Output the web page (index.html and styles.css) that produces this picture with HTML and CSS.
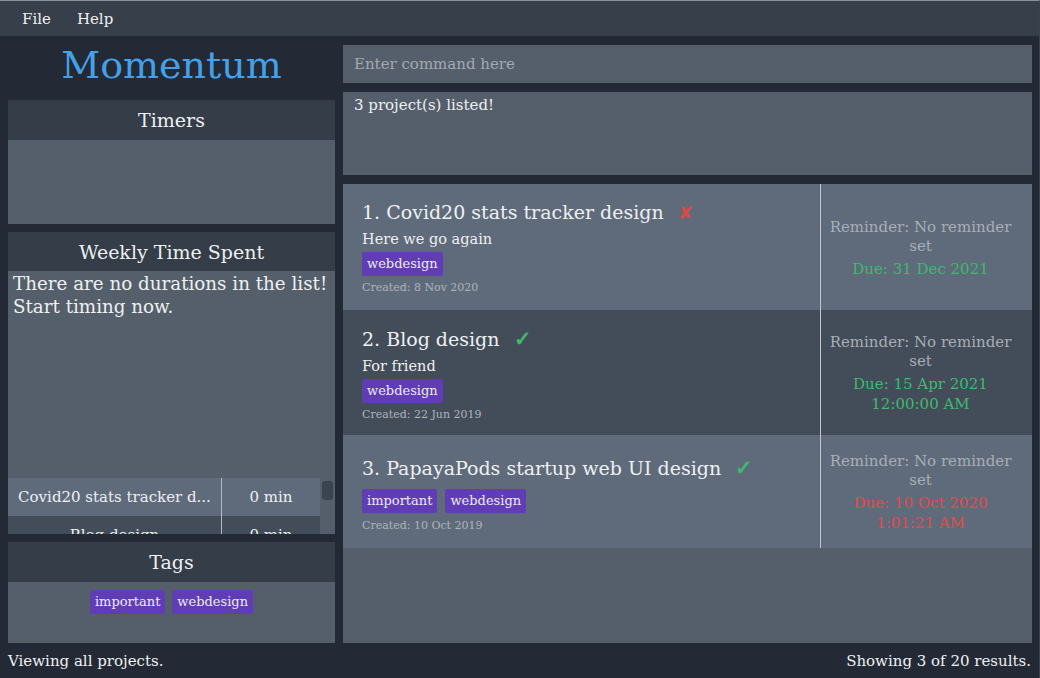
FILE: index.html
```html
<!DOCTYPE html>
<html>
<head>
<meta charset="utf-8">
<link rel="stylesheet" href="styles.css">
</head>
<body>
<div class="window">
  <div class="menubar">
    <span class="menu">File</span>
    <span class="menu">Help</span>
  </div>
  <div class="main">
    <div class="left">
      <div class="brand">Momentum</div>
      <div class="panel timers">
        <div class="panel-head">Timers</div>
        <div class="panel-body"></div>
      </div>
      <div class="panel weekly">
        <div class="panel-head">Weekly Time Spent</div>
        <div class="panel-body weekly-body">
          <div class="weekly-msg">There are no durations in the list!<br>Start timing now.</div>
          <div class="table-wrap">
            <div class="table">
              <div class="trow light"><div class="tname">Covid20 stats tracker d...</div><div class="ttime">0 min</div></div>
              <div class="trow dark"><div class="tname">Blog design</div><div class="ttime">0 min</div></div>
            </div>
            <div class="scroll"><div class="thumb"></div></div>
          </div>
        </div>
      </div>
      <div class="panel tags">
        <div class="panel-head">Tags</div>
        <div class="panel-body tags-body">
          <span class="tag">important</span><span class="tag">webdesign</span>
        </div>
      </div>
    </div>
    <div class="right">
      <div class="command">Enter command here</div>
      <div class="result">3 project(s) listed!</div>
      <div class="list">
        <div class="card light c1">
          <div class="card-main">
            <div class="title">1. Covid20 stats tracker design <span class="cross">✘</span></div>
            <div class="desc">Here we go again</div>
            <div class="card-tags"><span class="tag">webdesign</span></div>
            <div class="created">Created: 8 Nov 2020</div>
          </div>
          <div class="card-side">
            <div class="reminder">Reminder: No reminder set</div>
            <div class="due green">Due: 31 Dec 2021</div>
          </div>
        </div>
        <div class="card dark c2">
          <div class="card-main">
            <div class="title">2. Blog design <span class="check">✓</span></div>
            <div class="desc">For friend</div>
            <div class="card-tags"><span class="tag">webdesign</span></div>
            <div class="created">Created: 22 Jun 2019</div>
          </div>
          <div class="card-side">
            <div class="reminder">Reminder: No reminder set</div>
            <div class="due green">Due: 15 Apr 2021 12:00:00 AM</div>
          </div>
        </div>
        <div class="card light c3">
          <div class="card-main">
            <div class="title">3. PapayaPods startup web UI design <span class="check">✓</span></div>
            <div class="card-tags"><span class="tag">important</span><span class="tag">webdesign</span></div>
            <div class="created">Created: 10 Oct 2019</div>
          </div>
          <div class="card-side">
            <div class="reminder">Reminder: No reminder set</div>
            <div class="due red">Due: 10 Oct 2020 1:01:21 AM</div>
          </div>
        </div>
      </div>
    </div>
  </div>
  <div class="statusbar">
    <span>Viewing all projects.</span>
    <span>Showing 3 of 20 results.</span>
  </div>
</div>
</body>
</html>
```
FILE: styles.css
```css
* { box-sizing: border-box; }
html, body {
  margin: 0;
  padding: 0;
  width: 1040px;
  height: 678px;
  overflow: hidden;
  background: #232a35;
  font-family: "DejaVu Serif", "Liberation Serif", serif;
  color: #eef0f2;
}
.window {
  width: 1040px;
  height: 678px;
  display: flex;
  flex-direction: column;
  border-top: 1px solid #8a9099;
  border-right: 1px solid #3a424d;
}
.menubar {
  height: 35px;
  background: #373f4a;
  display: flex;
  align-items: center;
  padding-left: 22px;
  gap: 26px;
  font-size: 15px;
}
.main {
  display: flex;
  height: 607px;
  padding: 0 7px 0 8px;
  gap: 8px;
}
.left {
  width: 327px;
  display: flex;
  flex-direction: column;
}
.brand {
  height: 64px;
  display: flex;
  align-items: center;
  justify-content: center;
  color: #44a0e8;
  font-size: 38px;
  padding-bottom: 6px;
}
.panel { display: flex; flex-direction: column; }
.panel-head {
  background: #343d48;
  height: 40px;
  display: flex;
  align-items: center;
  justify-content: center;
  font-size: 19px;
}
.panel-body { background: #555f6b; flex: 1; }
.timers { height: 124px; }
.weekly { height: 302px; margin-top: 8px; }
.weekly .panel-head { height: 39px; }
.weekly-body {
  display: flex;
  flex-direction: column;
  overflow: hidden;
}
.weekly-msg {
  padding: 1px 5px;
  font-size: 18.3px;
  line-height: 23px;
  white-space: nowrap;
  flex: 1;
}
.table-wrap {
  height: 56px;
  display: flex;
  overflow: hidden;
}
.table { width: 312px; }
.trow {
  height: 38px;
  display: flex;
  font-size: 15px;
}
.trow.light { background: #5f6b7b; }
.trow.dark { background: #434c59; }
.tname {
  width: 214px;
  border-right: 1px solid #b5bbc2;
  display: flex;
  align-items: center;
  justify-content: center;
  white-space: nowrap;
  overflow: hidden;
}
.ttime {
  flex: 1;
  display: flex;
  align-items: center;
  justify-content: center;
}
.scroll {
  width: 15px;
  background: #555f6b;
  padding: 3px 2px;
}
.thumb {
  height: 19px;
  background: #3a4350;
  border-radius: 3px;
}
.tags { height: 101px; margin-top: 8px; }
.tags-body {
  display: flex;
  justify-content: center;
  align-items: flex-start;
  padding-top: 8px;
  gap: 7px;
}
.tag {
  display: inline-block;
  background: #613db5;
  color: #eceaf5;
  font-size: 13px;
  height: 24px;
  line-height: 24px;
  padding: 0 5px;
  border-radius: 2px;
}
.right {
  flex: 1;
  display: flex;
  flex-direction: column;
  padding-top: 9px;
  gap: 9px;
}
.command {
  height: 38px;
  background: #555f6b;
  color: #a2a9b2;
  font-size: 15px;
  display: flex;
  align-items: center;
  padding-left: 11px;
}
.result {
  height: 83px;
  background: #555f6b;
  font-size: 15px;
  padding: 4px 11px;
}
.list {
  flex: 1;
  background: #555f6b;
  display: flex;
  flex-direction: column;
}
.card { display: flex; }
.card.light { background: #5f6b7b; }
.card.dark { background: #434c59; }
.c1 { height: 126px; }
.c2 { height: 125px; }
.c3 { height: 113px; }
.card-main {
  width: 478px;
  border-right: 1px solid #c0c5cb;
  padding: 16px 0 0 19px;
}
.c3 .card-main { padding-top: 20px; }
.title {
  font-size: 19px;
  line-height: 25px;
  white-space: nowrap;
}
.cross { color: #e04848; margin-left: 8px; font-size: 18px; }
.check { color: #3dba6f; margin-left: 8px; font-size: 21px; font-weight: bold; }
.desc {
  font-size: 14.5px;
  margin-top: 4px;
  line-height: 20px;
}
.card-tags { display: flex; gap: 8px; margin-top: 3px; }
.c3 .card-tags { margin-top: 8px; }
.created {
  font-size: 11px;
  color: #aeb4bc;
  margin-top: 5px;
}
.c3 .created { margin-top: 6px; }
.card-side {
  flex: 1;
  display: flex;
  flex-direction: column;
  align-items: center;
  justify-content: center;
  text-align: center;
  padding: 2px 16px 0 4px;
}
.c3 .card-side { justify-content: flex-start; padding-top: 17px; }
.reminder {
  color: #a8aeb6;
  font-size: 15px;
  line-height: 19px;
}
.due {
  font-size: 15px;
  line-height: 20px;
  margin-top: 3px;
}
.green { color: #3dba6f; }
.red { color: #e34a4a; }
.statusbar {
  flex: 1;
  display: flex;
  justify-content: space-between;
  align-items: center;
  padding: 0 8px 0 8px;
  font-size: 15px;
}
```
